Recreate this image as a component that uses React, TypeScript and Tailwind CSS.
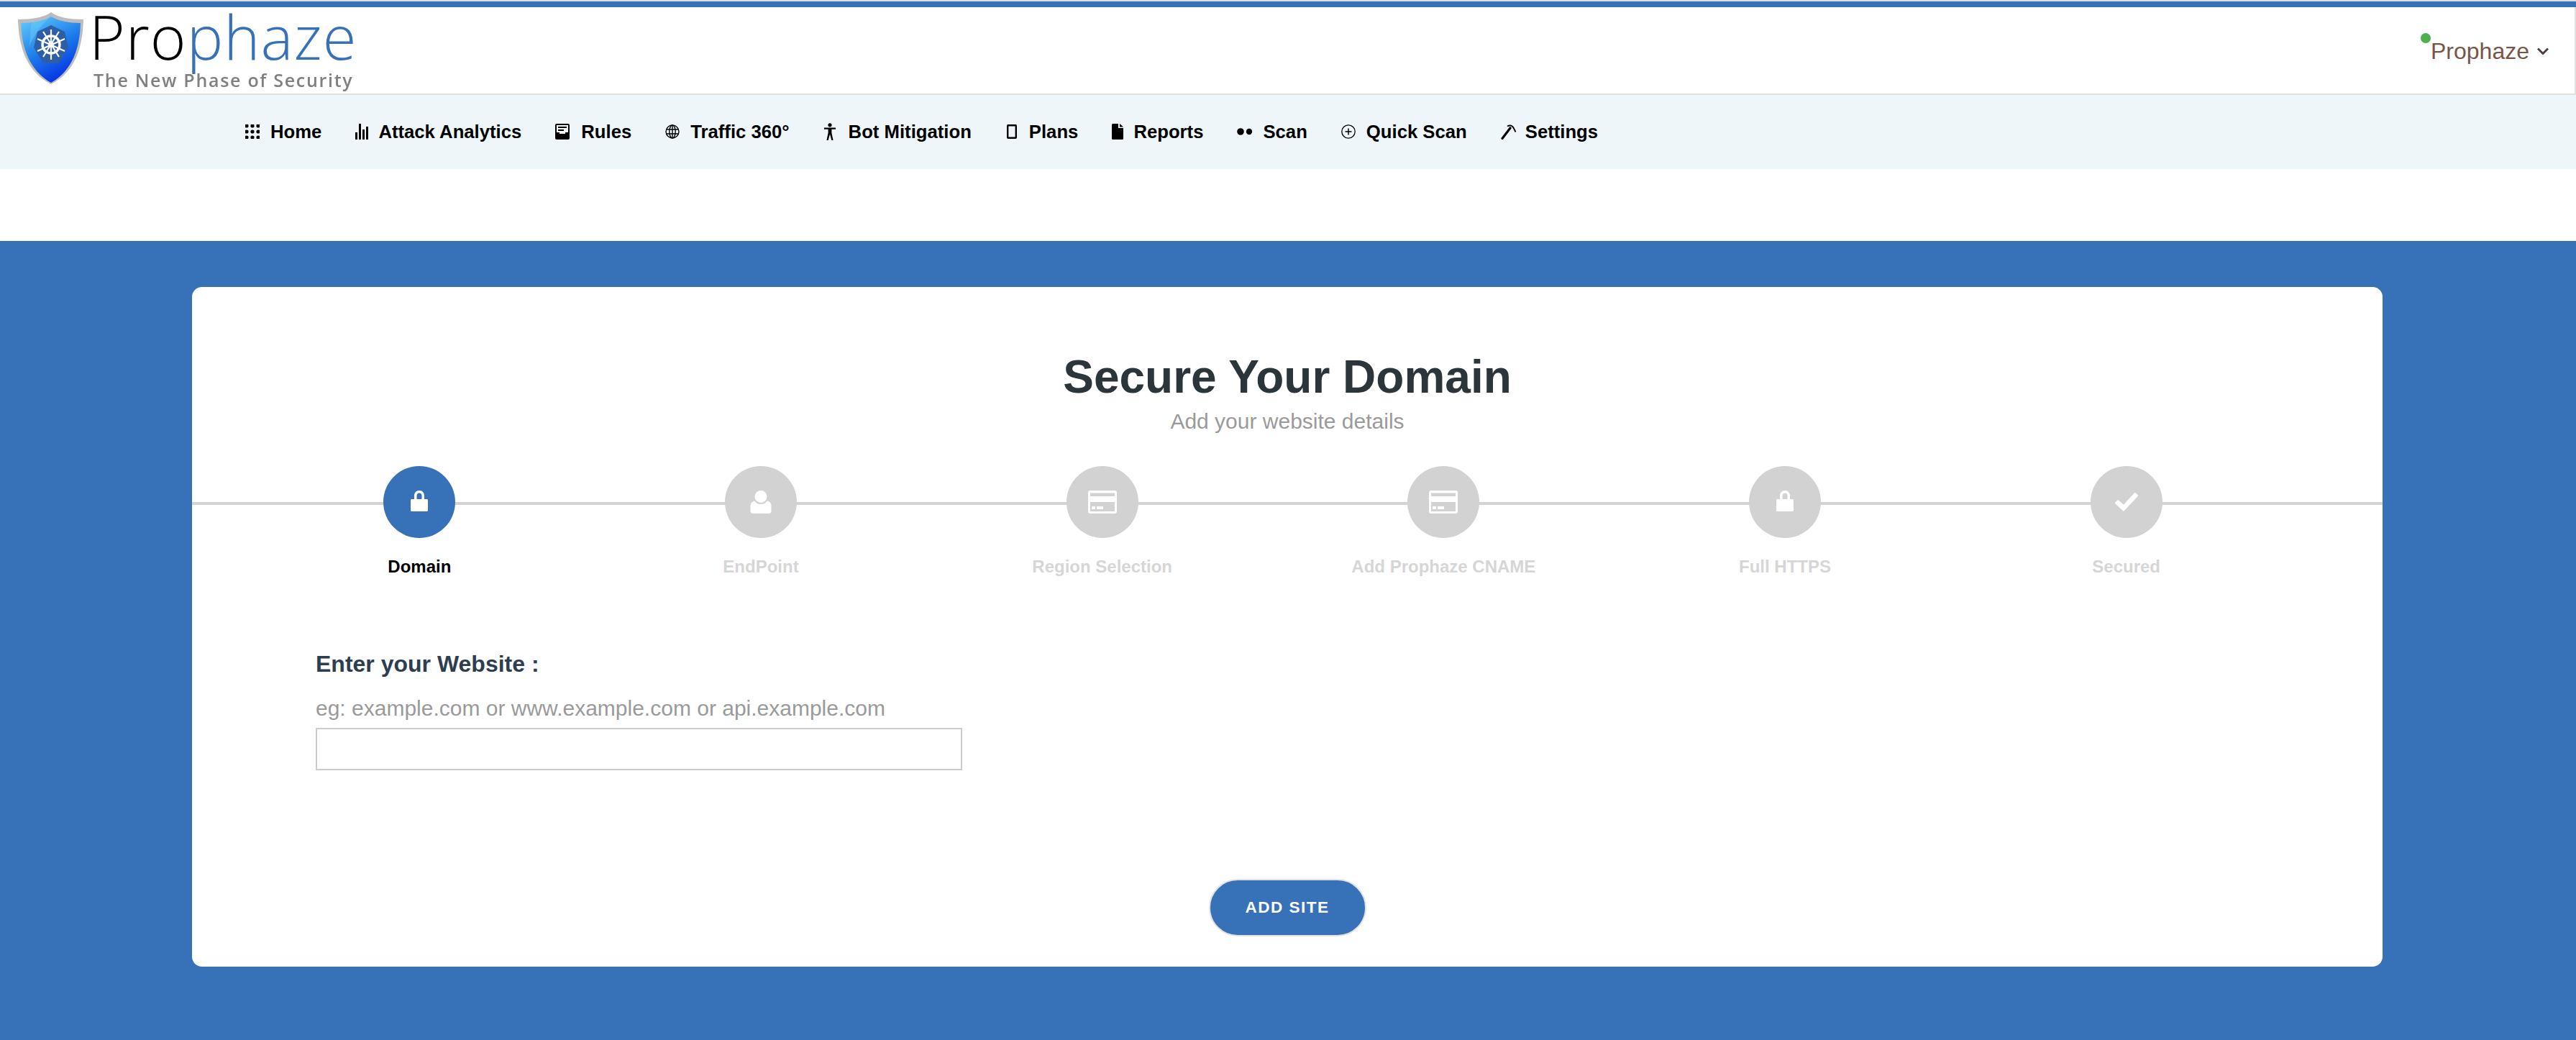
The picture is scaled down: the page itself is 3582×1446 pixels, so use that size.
const font = { fontFamily: '"Liberation Sans", Arial, sans-serif' };

function GridIcon() {
  const dots = [2, 10, 18];
  return (
    <svg viewBox="0 0 20 20" className="h-[20px] w-[20px]" fill="#000">
      {dots.map((y) => dots.map((x) => <circle key={`${x}-${y}`} cx={x} cy={y} r="2.6" />))}
    </svg>
  );
}

function BarsIcon() {
  return (
    <svg viewBox="0 0 18 22" className="h-[22px] w-[18px]" fill="#000">
      <rect x="0" y="12" width="3" height="10" />
      <rect x="5" y="0" width="3" height="22" />
      <rect x="10" y="8" width="3" height="14" />
      <rect x="15" y="4" width="3" height="18" />
    </svg>
  );
}

function TrayIcon() {
  return (
    <svg viewBox="0 0 20 22" className="h-[22px] w-[20px]">
      <rect x="0" y="0" width="20" height="22" rx="2" fill="#000" />
      <rect x="2" y="2" width="16" height="10" fill="#eef6fa" />
      <rect x="4" y="4" width="12" height="2" fill="#000" />
      <rect x="4" y="8" width="8" height="2" fill="#000" />
      <path d="M6 12h8v2H6z" fill="#eef6fa" />
    </svg>
  );
}

function GlobeIcon() {
  return (
    <svg viewBox="0 0 20 20" className="h-[20px] w-[20px]" fill="none" stroke="#000" strokeWidth="1.4">
      <circle cx="10" cy="10" r="9" />
      <ellipse cx="10" cy="10" rx="4.2" ry="9" />
      <path d="M10 1v18M1.5 7h17M1.5 13h17" />
    </svg>
  );
}

function FigureIcon() {
  return (
    <svg viewBox="0 0 18 24" className="h-[24px] w-[18px]" fill="#000">
      <circle cx="9" cy="2.8" r="2.6" />
      <path d="M1 6.5h16v2.2h-5.6v5L13.6 24h-2.3L9 15.5 6.7 24H4.4l2.2-10.3v-5H1z" />
    </svg>
  );
}

function PlansIcon() {
  return (
    <svg viewBox="0 0 14 20" className="h-[20px] w-[14px]" fill="none" stroke="#000" strokeWidth="2.4">
      <rect x="1.2" y="1.2" width="11.6" height="17.6" rx="0.6" />
    </svg>
  );
}

function FileIcon() {
  return (
    <svg viewBox="0 0 16 22" className="h-[22px] w-[16px]" fill="#000">
      <path d="M1.5 0H9v6h7v14.5a1.5 1.5 0 0 1-1.5 1.5h-13A1.5 1.5 0 0 1 0 20.500V1.500A1.500 1.500 0 0 1 1.500 0zM11 0l5 4.500h-5z" />
    </svg>
  );
}

function DotsIcon() {
  return (
    <svg viewBox="0 0 22 10" className="h-[10px] w-[22px]" fill="#000">
      <circle cx="5" cy="5" r="4.800" />
      <circle cx="17" cy="5" r="4.200" />
    </svg>
  );
}

function PlusCircleIcon() {
  return (
    <svg viewBox="0 0 20 20" className="h-[20px] w-[20px]" fill="none" stroke="#000" strokeWidth="1.3">
      <circle cx="10" cy="10" r="9.200" />
      <path d="M10 5.500v9M5.500 10h9" strokeWidth="1.500" />
    </svg>
  );
}

function HammerIcon() {
  return (
    <svg viewBox="0 0 22 22" className="h-[22px] w-[22px]" fill="none" stroke="#000">
      <path d="M2 20.500 13 6" strokeWidth="3.200" strokeLinecap="round" />
      <path d="M9 3.500c4-2 7-1 9 3l2.500 5" strokeWidth="1.800" />
    </svg>
  );
}

const navItems = [
  { label: "Home", box: "w-[35px]", icon: <GridIcon /> },
  { label: "Attack Analytics", box: "w-[32px]", icon: <BarsIcon /> },
  { label: "Rules", box: "w-[36px]", icon: <TrayIcon /> },
  { label: "Traffic 360°", box: "w-[35px]", icon: <GlobeIcon /> },
  { label: "Bot Mitigation", box: "w-[35px]", icon: <FigureIcon /> },
  { label: "Plans", box: "w-[33px] pl-[2px]", icon: <PlansIcon /> },
  { label: "Reports", box: "w-[30px]", icon: <FileIcon /> },
  { label: "Scan", box: "w-[36px]", icon: <DotsIcon /> },
  { label: "Quick Scan", box: "w-[35px]", icon: <PlusCircleIcon /> },
  { label: "Settings", box: "w-[34px]", icon: <HammerIcon /> },
];

function LockIcon() {
  return (
    <svg viewBox="0 0 24 32" className="h-[32px] w-[24px]" fill="#fff">
      <path fillRule="evenodd" d="M12 0c4.600 0 7 3.200 7 7.500V12h3.500c.900 0 1.500.600 1.500 1.500v14c0 .900-.600 1.500-1.500 1.500h-21C.600 29 0 28.400 0 27.500v-14C0 12.600.600 12 1.500 12H5V7.500C5 3.200 7.400 0 12 0zm0 3.500c-2.300 0-3.500 1.700-3.500 4V12h7V7.500c0-2.300-1.200-4-3.500-4z" />
    </svg>
  );
}

function PersonIcon() {
  return (
    <svg viewBox="0 0 30 32" className="h-[32px] w-[30px]" fill="#fff">
      <ellipse cx="15" cy="8.500" rx="8.500" ry="8.500" />
      <path d="M6.500 14.500c1.500 3 4.800 4.500 8.500 4.500s7-1.500 8.500-4.500c4 .800 6 3 6 7.500v6.500c0 2.300-1.500 3.500-3.500 3.500H4c-2 0-3.500-1.200-3.500-3.500V22c0-4.500 2-6.700 6-7.500z" />
    </svg>
  );
}

function CardIcon() {
  return (
    <svg viewBox="0 0 40 32" className="h-[32px] w-[40px]">
      <rect x="0" y="0" width="40" height="32" rx="3" fill="#fff" />
      <rect x="3" y="3.500" width="34" height="4.500" fill="#d2d2d2" />
      <rect x="3" y="16" width="34" height="13" fill="#d2d2d2" />
      <rect x="5" y="22" width="5" height="4" fill="#fff" />
      <rect x="12" y="22" width="9" height="4" fill="#fff" />
    </svg>
  );
}

function CheckIcon() {
  return (
    <svg viewBox="0 0 32 26" className="h-[26px] w-[32px]" fill="#fff">
      <path d="M12 26 .600 15.500a1.500 1.500 0 0 1 0-2.200l2.600-2.500a1.500 1.500 0 0 1 2.100 0L12 16.800 26.700.500a1.500 1.500 0 0 1 2.100 0l2.600 2.500a1.500 1.500 0 0 1 0 2.200z" />
    </svg>
  );
}

const steps = [
  { label: "Domain", icon: <LockIcon /> },
  { label: "EndPoint", icon: <PersonIcon /> },
  { label: "Region Selection", icon: <CardIcon /> },
  { label: "Add Prophaze CNAME", icon: <CardIcon /> },
  { label: "Full HTTPS", icon: <LockIcon /> },
  { label: "Secured", icon: <CheckIcon /> },
];

function Logo() {
  return (
    <div className="flex h-full items-start blur-[0.6px]">
      <svg viewBox="0 0 93 102" className="ml-[24px] mt-[6px] h-[102px] w-[93px]">
        <defs>
          <linearGradient id="shieldFill" x1="0.100" y1="0" x2="0.600" y2="1">
            <stop offset="0" stopColor="#5ecbf9" />
            <stop offset="0.550" stopColor="#1c78ea" />
            <stop offset="1" stopColor="#0430e2" />
          </linearGradient>
        </defs>
        <path d="M47 1c9 7 26 10 45 10-1 38-11 73-45 90C13 84 2 49 1 11c19 0 37-3 46-10z" fill="#bcbcbc" />
        <path d="M47 7c10 6 25 9 41 9-1 34-11 66-41 83C17 82 6 50 5 16c16 0 32-3 42-9z" fill="url(#shieldFill)" />
        <path d="M47 7c-8 5-20 7-26 8-4 8-2 22-5 34 6-12 14-28 31-42z" fill="#7bd6fb" opacity="0.350" />
        <path d="M47 19 66 28l5 22-13 22H36L23 50l5-22z" fill="#2f5ea8" />
        <g stroke="#fff" fill="none">
          <circle cx="47" cy="46" r="12" strokeWidth="3.400" />
          <circle cx="47" cy="46" r="3" strokeWidth="2.200" />
          <path d="M47 25v42M28 38l38 17M66 38 28 55M36 28l22 35M58 28 36 63" strokeWidth="2.200" />
        </g>
      </svg>
      <div className="ml-[7px] flex flex-col">
        <div className="mt-[-4px] h-[88px] whitespace-nowrap text-[85px] font-light leading-[88px] tracking-[1px]" style={{ fontFamily: '"Open Sans", Lato, sans-serif' }}>
          <span className="text-black">Pro</span>
          <span className="text-[#3771b7]">phaze</span>
        </div>
        <div className="mt-[2px] whitespace-nowrap pl-[6px] text-[25px] font-semibold leading-[30px] tracking-[1.700px] text-[#808080]" style={{ fontFamily: '"Open Sans", Lato, sans-serif' }}>
          The New Phase of Security
        </div>
      </div>
    </div>
  );
}

export default function App() {
  return (
    <div className="flex h-[1446px] w-[3582px] flex-col overflow-hidden bg-white" style={font}>
      {/* Top header */}
      <div className="h-[2px] bg-[#dcdcdc]" />
      <div className="h-[8px] bg-[#3771b7]" />
      <header className="flex h-[122px] items-start justify-between border-b-2 border-r-2 border-[#e0e0e0] bg-white">
        <Logo />
        <div className="relative mr-[36px] mt-[39px] flex items-center">
          <span className="absolute left-[-14px] top-[-3px] h-[14px] w-[14px] rounded-full bg-[#4caf50]" />
          <span className="text-[32px] leading-[44px] text-[#795548]">Prophaze</span>
          <svg viewBox="0 0 16 10" className="ml-[11px] h-[10px] w-[16px]" fill="none" stroke="#4e3f3f" strokeWidth="3">
            <path d="m1 1.500 7 7 7-7" />
          </svg>
        </div>
      </header>

      {/* Navigation */}
      <nav className="flex h-[103px] items-center gap-[47px] bg-[#eef6fa] pl-[341px]">
        {navItems.map((item) => (
          <a key={item.label} className="flex items-center whitespace-nowrap text-[25.700px] font-bold text-black">
            <span className={`flex justify-start ${item.box}`}>{item.icon}</span>
            {item.label}
          </a>
        ))}
      </nav>

      <div className="h-[100px] bg-white" />

      {/* Wizard */}
      <main className="flex-1 bg-[#3771b7] px-[267px] pt-[64px]">
        <section className="relative flex h-[945px] w-[3046px] flex-col rounded-[14px] bg-white">
          <h1 className="mt-[89px] text-center text-[64px] font-bold leading-[72px] text-[#2c3539]">Secure Your Domain</h1>
          <p className="mt-[6px] text-center text-[30px] leading-[40px] text-[#9a9a9a]">Add your website details</p>

          <div className="relative mt-[42px]">
            <div className="absolute left-0 right-0 top-[50px] h-[4px] bg-[#d3d3d3]" />
            <ol className="relative ml-[79px] grid w-[2848px] grid-cols-6">
              {steps.map((step, i) => (
                <li key={step.label} className="flex flex-col items-center">
                  <div className={`flex h-[100px] w-[100px] items-center justify-center rounded-full ${i === 0 ? "bg-[#3771b7]" : "bg-[#d2d2d2]"}`}>
                    {step.icon}
                  </div>
                  <span className={`mt-[25px] text-[24px] font-bold leading-[30px] ${i === 0 ? "text-black" : "text-[#d6d6d6]"}`}>
                    {step.label}
                  </span>
                </li>
              ))}
            </ol>
          </div>

          <div className="ml-[172px] mt-[100px] w-[899px]">
            <label className="block text-[32px] font-bold leading-[40px] text-[#2c3e50]">Enter your Website :</label>
            <p className="mt-[22px] text-[30px] leading-[40px] text-[#9a9a9a]">eg: example.com or www.example.com or api.example.com</p>
            <input className="mt-[7px] block h-[59px] w-full border-2 border-[#cccccc] bg-white" />
          </div>

          <button className="mx-auto mt-[151px] h-[80px] w-[219px] rounded-full border-2 border-[#e3e3e3] bg-[#3771b7] text-[22.500px] font-bold tracking-[1.500px] text-white">
            ADD SITE
          </button>
        </section>
      </main>
    </div>
  );
}
